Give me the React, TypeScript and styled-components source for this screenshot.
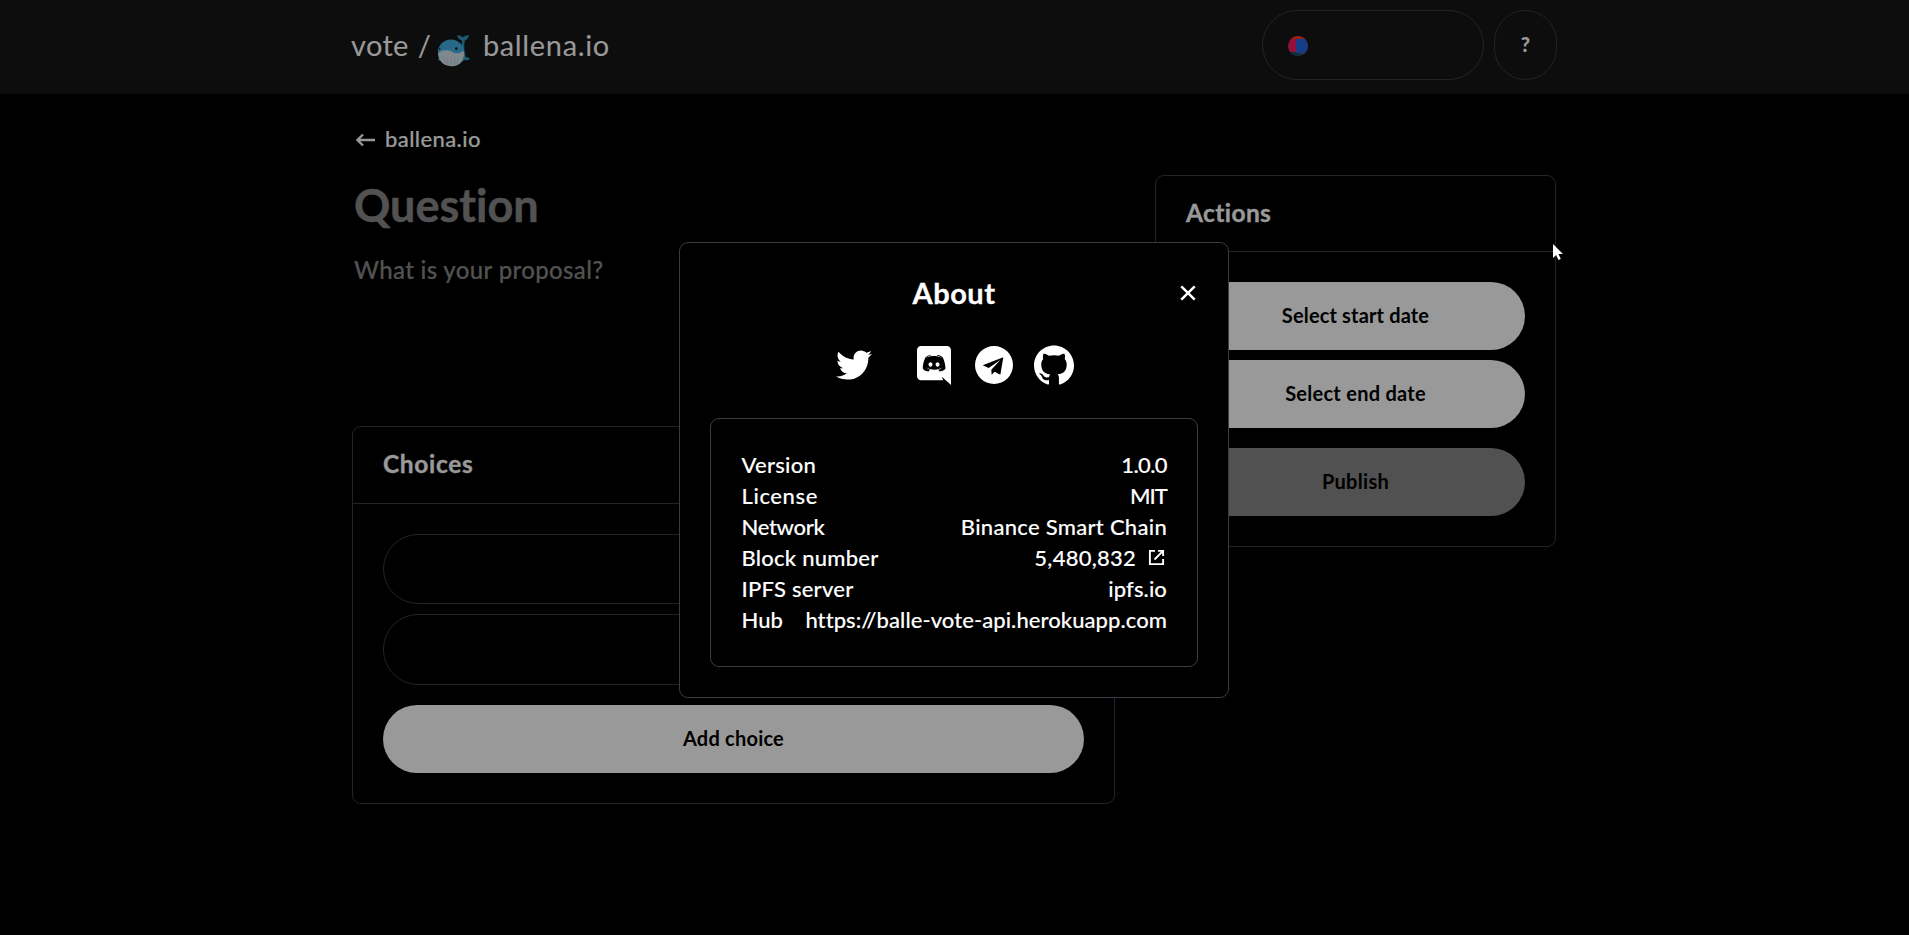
import React from 'react';
import styled, { createGlobalStyle } from 'styled-components';
import { FaTwitter } from 'react-icons/fa';

const GlobalStyle = createGlobalStyle`
  * { box-sizing: border-box; }
  html, body { margin: 0; background: #000; }
  body {
    font-family: Lato, "Liberation Sans", sans-serif;
    font-size: 22px;
    font-weight: 500;
    line-height: 31px;
    font-variant-ligatures: none;
    color: #fff;
    overflow: hidden;
  }
`;

const border = '#363d44';

const Page = styled.div`
  position: relative;
  width: 1909px;
  height: 935px;
  overflow: hidden;
`;

const TopBar = styled.header`
  height: 94px;
  padding: 0 352px 0 351px;
  background: #161616;
  display: flex;
  align-items: center;
  justify-content: space-between;
`;

const Brand = styled.div`
  display: flex;
  align-items: center;
  font-size: 29px;
  font-weight: 400;
  line-height: 36px;
  padding-bottom: 4px;
`;

const Label = styled.span<{ $track?: number; $stroke?: number }>`
  letter-spacing: ${(p) => p.$track ?? 0}px;
  -webkit-text-stroke: ${(p) => p.$stroke ?? 0}px currentColor;
  white-space: nowrap;
`;

const Slash = styled.span`
  margin: 0 6px 0 9px;
`;

const Whale = styled.svg`
  width: 34px;
  height: 33px;
  margin: 11px 12px 0 0;
`;

const TopActions = styled.div`
  display: flex;
  gap: 10px;
  padding-bottom: 4px;
`;

const Pill = styled.div<{ $w: number }>`
  width: ${(p) => p.$w}px;
  height: 70px;
  border: 1px solid ${border};
  border-radius: 35px;
  display: flex;
  align-items: center;
`;

const AccountPill = styled(Pill)`
  padding: 1px 0 0 25px;
`;

const HelpPill = styled(Pill)`
  justify-content: center;
  font-size: 20px;
  font-weight: 900;
  padding-bottom: 2px;
`;

const Avatar = styled.svg`
  width: 20px;
  height: 20px;
`;

const Main = styled.main`
  display: flex;
  gap: 40px;
  padding-left: 352px;
`;

const Left = styled.section`
  width: 763px;
`;

const Right = styled.aside`
  width: 401px;
  padding-top: 81px;
`;

const Back = styled.div`
  display: flex;
  align-items: center;
  gap: 10px;
  padding-left: 4px;
  margin-top: 29px;
  height: 31px;
`;

const BackArrow = styled.svg`
  width: 19px;
  height: 14px;
  margin-top: 3px;
`;

const Question = styled.h1`
  margin: 21px 0 0 2px;
  font-size: 45px;
  font-weight: 700;
  line-height: 60px;
  color: #898989;
`;

const Prompt = styled.div`
  margin: 18px 0 0 2px;
  font-size: 24px;
  line-height: 34px;
  height: 173px;
  color: #898989;
`;

const Card = styled.div`
  border: 1px solid ${border};
  border-radius: 9px;
`;

const CardTitle = styled.h4<{ $h: number }>`
  margin: 0;
  height: ${(p) => p.$h}px;
  padding: 20px 30px 0;
  font-size: 24.5px;
  font-weight: 700;
  line-height: 34px;
  border-bottom: 1px solid ${border};
`;

const CardBody = styled.div`
  display: flex;
  flex-direction: column;
  gap: 10px;
  padding: 30px;
`;

const ChoiceInput = styled.div`
  height: 70.4px;
  border: 1px solid ${border};
  border-radius: 35px;
`;

const Button = styled.div<{ $muted?: boolean; $spaced?: boolean }>`
  height: 68px;
  margin-top: ${(p) => (p.$spaced ? 10 : 0)}px;
  border-radius: 34px;
  background: ${(p) => (p.$muted ? '#878787' : '#fff')};
  color: #000;
  font-size: 20px;
  font-weight: 700;
  display: flex;
  align-items: center;
  justify-content: center;
  padding-bottom: 1px;
`;

const Shade = styled.div`
  position: absolute;
  inset: 0;
  background: rgba(0, 0, 0, 0.4);
`;

const ModalLayer = styled.div`
  position: absolute;
  inset: 0;
  display: flex;
  justify-content: center;
  align-items: flex-start;
  padding: 242px 1px 0 0;
`;

const Modal = styled.div`
  width: 550px;
  height: 456px;
  background: #000;
  border: 1px solid ${border};
  border-radius: 9px;
  padding: 30px;
`;

const ModalHead = styled.div`
  display: grid;
  grid-template-columns: 1fr auto 1fr;
  align-items: center;
`;

const ModalTitle = styled.h3`
  grid-column: 2;
  margin: 0;
  font-size: 29px;
  font-weight: 700;
  line-height: 39px;
`;

const CloseIcon = styled.svg`
  width: 16px;
  height: 16px;
  justify-self: end;
  margin: 1px 2px 0 0;
`;

const Social = styled.div`
  display: flex;
  align-items: center;
  margin: 32px 0 32px 126px;
  height: 42px;
`;

const SocialIcon = styled.svg<{ $w: number; $h: number; $gap: number }>`
  width: ${(p) => p.$w}px;
  height: ${(p) => p.$h}px;
  margin-left: ${(p) => p.$gap}px;
  fill: #fff;
  flex: none;
`;

const InfoBox = styled.div`
  width: 488px;
  height: 249px;
  border: 1px solid ${border};
  border-radius: 9px;
  padding: 30px 30px 30px 30.5px;
`;

const InfoRow = styled.div`
  display: flex;
  justify-content: space-between;
  height: 31px;
`;

const InfoValue = styled.span`
  display: flex;
  align-items: center;
`;

const ExternalIcon = styled.svg`
  width: 17px;
  height: 17px;
  margin: 0 2px 0 12px;
`;

const Pointer = styled.svg`
  position: absolute;
  left: 1552px;
  top: 243px;
  width: 12px;
  height: 18px;
`;

type Info = { name: string; nameTrack: number; value: string; valueTrack: number; link?: boolean };

const info: Info[] = [
  { name: 'Version', nameTrack: 0.27, value: '1.0.0', valueTrack: -0.6 },
  { name: 'License', nameTrack: 0.6, value: 'MIT', valueTrack: -0.9 },
  { name: 'Network', nameTrack: -0.3, value: 'Binance Smart Chain', valueTrack: 0.29 },
  { name: 'Block number', nameTrack: 0.24, value: '5,480,832', valueTrack: 0.25, link: true },
  { name: 'IPFS server', nameTrack: 0.24, value: 'ipfs.io', valueTrack: 0.1 },
  { name: 'Hub', nameTrack: 0, value: 'https://balle-vote-api.herokuapp.com', valueTrack: 0.07 },
];

export default function App() {
  return (
    <Page>
      <GlobalStyle />
      <TopBar>
        <Brand>
          <Label $track={0.35}>vote</Label>
          <Slash>/</Slash>
          <Whale viewBox="292 104 102 99">
            <path d="M367 124 Q354 120 352 108 Q362 107 370 114 Q377 107 388 108 Q386 120 375 124 Q371 150 379 174 Q388 172 391 179 Q386 185 374 182 L362 190 Z" fill="#2f97c4" />
            <path d="M294 182 Q298 174 306 176 L306 186 Z" fill="#2f97c4" />
            <circle cx="334" cy="160" r="39.5" fill="#43b0e4" />
            <path d="M295 164 Q303 152 320 153 Q336 154 343 161 Q360 163 366 157 Q376 152 373 166 Q369 201 333 201 Q300 198 295 164 Z" fill="#d3e4ec" />
            <path d="M310 172 L315 193 M322 174 L324 198 M334 174 L334 199 M346 173 L343 197 M357 171 L352 192" stroke="#b3c6d0" strokeWidth="2" fill="none" />
            <circle cx="350" cy="148" r="4" fill="#10242e" />
            <circle cx="300" cy="148" r="2.5" fill="#10242e" />
          </Whale>
          <Label $track={0.65}>ballena.io</Label>
        </Brand>
        <TopActions>
          <AccountPill $w={222}>
            <Avatar viewBox="0 0 20 20">
              <clipPath id="disc">
                <circle cx="10" cy="10" r="10" />
              </clipPath>
              <g clipPath="url(#disc)">
                <rect width="20" height="20" fill="#fb1a62" />
                <path d="M0 0H20V3H5Z" fill="#fa3a10" />
                <path d="M0 15L20 19V20H0Z" fill="#035a63" />
                <path d="M8 3H20V18.5L8 16.5Z" fill="#2464e0" />
              </g>
            </Avatar>
          </AccountPill>
          <HelpPill $w={63}>?</HelpPill>
        </TopActions>
      </TopBar>

      <Main>
        <Left>
          <Back>
            <BackArrow viewBox="0 0 19 14" fill="none" stroke="#fff" strokeWidth="2.3">
              <path d="M19 7H2M7 1.5L1.5 7L7 12.5" />
            </BackArrow>
            <Label $track={0.4} $stroke={0.15}>ballena.io</Label>
          </Back>
          <Question><Label $track={0} $stroke={0.5}>Question</Label></Question>
          <Prompt><Label $track={0.35} $stroke={0.2}>What is your proposal?</Label></Prompt>
          <Card>
            <CardTitle $h={77}><Label $track={0.65} $stroke={0.3}>Choices</Label></CardTitle>
            <CardBody>
              <ChoiceInput />
              <ChoiceInput />
              <Button $spaced><Label $track={0.22}>Add choice</Label></Button>
            </CardBody>
          </Card>
        </Left>
        <Right>
          <Card>
            <CardTitle $h={76}><Label $track={0.4} $stroke={0.3}>Actions</Label></CardTitle>
            <CardBody>
              <Button><Label $track={0.15}>Select start date</Label></Button>
              <Button><Label $track={0.26}>Select end date</Label></Button>
              <Button $muted $spaced><Label $track={0.3}>Publish</Label></Button>
            </CardBody>
          </Card>
        </Right>
      </Main>

      <Shade />
      <ModalLayer>
        <Modal>
          <ModalHead>
            <ModalTitle><Label $track={0.5} $stroke={0.3}>About</Label></ModalTitle>
            <CloseIcon viewBox="0 0 16 16" fill="none" stroke="#fff" strokeWidth="2.5">
              <path d="M1.3 1.3L14.7 14.7M14.7 1.3L1.3 14.7" />
            </CloseIcon>
          </ModalHead>
          <Social>
            <SocialIcon as={FaTwitter} $w={36} $h={36} $gap={0} />
            <SocialIcon viewBox="0 0 448 512" $w={34} $h={39} $gap={45}>
              <path d="M297.216 243.2c0 15.616-11.52 28.416-26.112 28.416-14.336 0-26.112-12.8-26.112-28.416s11.52-28.416 26.112-28.416c14.592 0 26.112 12.8 26.112 28.416zm-119.552-28.416c-14.592 0-26.112 12.8-26.112 28.416s11.776 28.416 26.112 28.416c14.592 0 26.112-12.8 26.112-28.416.256-15.616-11.52-28.416-26.112-28.416zM448 52.736V512c-64.494-56.994-43.868-38.128-118.784-107.776l13.568 47.36H52.48C23.552 451.584 0 428.032 0 398.848V52.736C0 23.552 23.552 0 52.48 0h343.04C424.448 0 448 23.552 448 52.736zm-72.96 242.688c0-82.432-36.864-149.248-36.864-149.248-36.864-27.648-71.936-26.88-71.936-26.88l-3.584 4.096c43.52 13.312 63.744 32.512 63.744 32.512-60.811-33.329-132.244-33.335-191.232-7.424-9.472 4.352-15.104 7.424-15.104 7.424s21.248-20.224 67.328-33.536l-2.56-3.072s-35.072-.768-71.936 26.88c0 0-36.864 66.816-36.864 149.248 0 0 21.504 37.12 78.08 38.912 0 0 9.472-11.52 17.152-21.248-32.512-9.728-44.8-30.208-44.8-30.208 3.766 2.636 9.976 6.053 10.496 6.4 43.21 24.198 104.588 32.126 159.744 8.96 8.96-3.328 18.944-8.192 29.44-15.104 0 0-12.8 20.992-46.336 30.464 7.68 9.728 16.896 20.736 16.896 20.736 56.576-1.792 78.336-38.912 78.336-38.912z" />
            </SocialIcon>
            <SocialIcon viewBox="0 0 114 114" $w={38} $h={38} $gap={24}>
              <path fillRule="evenodd" d="M57 0A57 57 0 1 0 57 114A57 57 0 1 0 57 0ZM85 34L76 86L59 77L50 86L49 71L76 42L41 66L23 58Z" />
            </SocialIcon>
            <SocialIcon viewBox="0 0 24 24" $w={40} $h={40} $gap={21}>
              <path d="M12 .297c-6.63 0-12 5.373-12 12 0 5.303 3.438 9.8 8.205 11.385.6.113.82-.258.82-.577 0-.285-.01-1.04-.015-2.04-3.338.724-4.042-1.61-4.042-1.61C4.422 18.07 3.633 17.7 3.633 17.7c-1.087-.744.084-.729.084-.729 1.205.084 1.838 1.236 1.838 1.236 1.07 1.835 2.809 1.305 3.495.998.108-.776.417-1.305.76-1.605-2.665-.3-5.466-1.332-5.466-5.93 0-1.31.465-2.38 1.235-3.22-.135-.303-.54-1.523.105-3.176 0 0 1.005-.322 3.3 1.23.96-.267 1.98-.399 3-.405 1.02.006 2.04.138 3 .405 2.28-1.552 3.285-1.23 3.285-1.23.645 1.653.24 2.873.12 3.176.765.84 1.23 1.91 1.23 3.22 0 4.61-2.805 5.625-5.475 5.92.42.36.81 1.096.81 2.22 0 1.606-.015 2.896-.015 3.286 0 .315.21.69.825.57C20.565 22.092 24 17.592 24 12.297c0-6.627-5.373-12-12-12" />
            </SocialIcon>
          </Social>
          <InfoBox>
            {info.map((row) => (
              <InfoRow key={row.name}>
                <Label $track={row.nameTrack} $stroke={0.12}>{row.name}</Label>
                <InfoValue>
                  <Label $track={row.valueTrack} $stroke={0.12}>{row.value}</Label>
                  {row.link && (
                    <ExternalIcon viewBox="0 0 17 17" fill="none" stroke="#fff" strokeWidth="1.9">
                      <path d="M7 1.9H1.9V15.1H15.1V10M10 1.9H15.1V7M15.1 1.9L6.5 10.5" />
                    </ExternalIcon>
                  )}
                </InfoValue>
              </InfoRow>
            ))}
          </InfoBox>
        </Modal>
      </ModalLayer>
      <Pointer viewBox="0 0 12 18">
        <path d="M1 1V15L4 12L6.5 17L8.8 16L6.5 11H11Z" fill="#fff" />
      </Pointer>
    </Page>
  );
}
